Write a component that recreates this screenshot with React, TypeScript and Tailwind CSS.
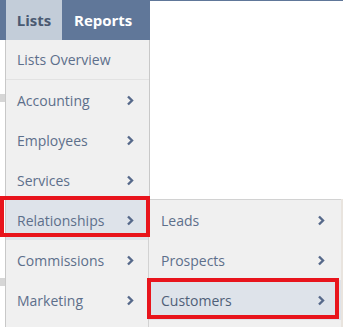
import React from "react";

const Chevron = () => (
  <svg width="8" height="11" viewBox="0 0 8 11" className="shrink-0">
    <polyline points="2,1.5 6,5.5 2,9.5" fill="none" stroke="#56698a" strokeWidth="2.4" strokeLinejoin="miter" />
  </svg>
);

const Item = ({ label, chevron = true, active = false, sep = false }: { label: string; chevron?: boolean; active?: boolean; sep?: boolean }) => (
  <div
    className={`flex h-[40px] items-center justify-between pl-[11px] pr-[15px] ${active ? "bg-[#dee3ea]" : ""} ${sep ? "border-b border-[#e2e2e2]" : ""}`}
  >
    <span className="text-[14px] text-[#5d6f8b]">{label}</span>
    {chevron && <Chevron />}
  </div>
);

export default function App() {
  return (
    <div
      className="relative h-[327px] w-[343px] overflow-hidden bg-white"
      style={{ fontFamily: '"Open Sans", sans-serif' }}
    >
      {/* top strip */}
      <div className="flex h-[1px] w-full bg-[#607799]" />
      <div className="absolute left-0 top-0 flex h-[40px] w-[150px] bg-[#607799]">
        <div className="w-[6px]" />
        <div className="flex w-[56px] items-center justify-center bg-[#c3cdd9] text-[15px] font-bold text-[#4a5a72]">
          Lists
        </div>
        <div className="flex items-center pl-[12px] text-[15px] font-bold text-white">Reports</div>
      </div>

      {/* page background fragments */}
      <div className="absolute left-0 top-[94px] h-[8px] w-[5px] bg-[#d6d6d6]" />
      <div className="absolute left-0 top-[278px] h-[8px] w-[5px] bg-[#d6d6d6]" />

      {/* main menu */}
      <div className="absolute left-[5px] top-[40px] w-[145px] border-l border-r border-[#c8c8c8] bg-[#f0f0f0] pb-[20px]">
        <Item label="Lists Overview" chevron={false} sep />
        <Item label="Accounting" />
        <Item label="Employees" />
        <Item label="Services" />
        <Item label="Relationships" active />
        <Item label="Commissions" />
        <Item label="Marketing" />
      </div>

      {/* submenu */}
      <div className="absolute left-[148px] top-[199px] w-[193px] border-l border-t border-[#d2d2d2] bg-[#f0f0f0] pb-[20px]">
        <div className="flex h-[40px] items-center justify-between pl-[12px] pr-[16px]">
          <span className="text-[14px] text-[#5d6f8b]">Leads</span>
          <Chevron />
        </div>
        <div className="flex h-[40px] items-center justify-between pl-[12px] pr-[16px]">
          <span className="text-[14px] text-[#5d6f8b]">Prospects</span>
          <Chevron />
        </div>
        <div className="flex h-[40px] items-center justify-between bg-[#dee3ea] pl-[12px] pr-[16px]">
          <span className="text-[14px] text-[#4f5f78]">Customers</span>
          <Chevron />
        </div>
      </div>
      <div className="absolute left-[341px] top-[199px] h-[128px] w-[2px] bg-[#e9e4de]" />

      {/* red highlight boxes */}
      <div className="absolute left-0 top-[196px] h-[41px] w-[150px] border-[4px] border-[#e8141c]" />
      <div className="absolute left-[147px] top-[278px] h-[41px] w-[192px] border-[4px] border-[#e8141c]" />
    </div>
  );
}
